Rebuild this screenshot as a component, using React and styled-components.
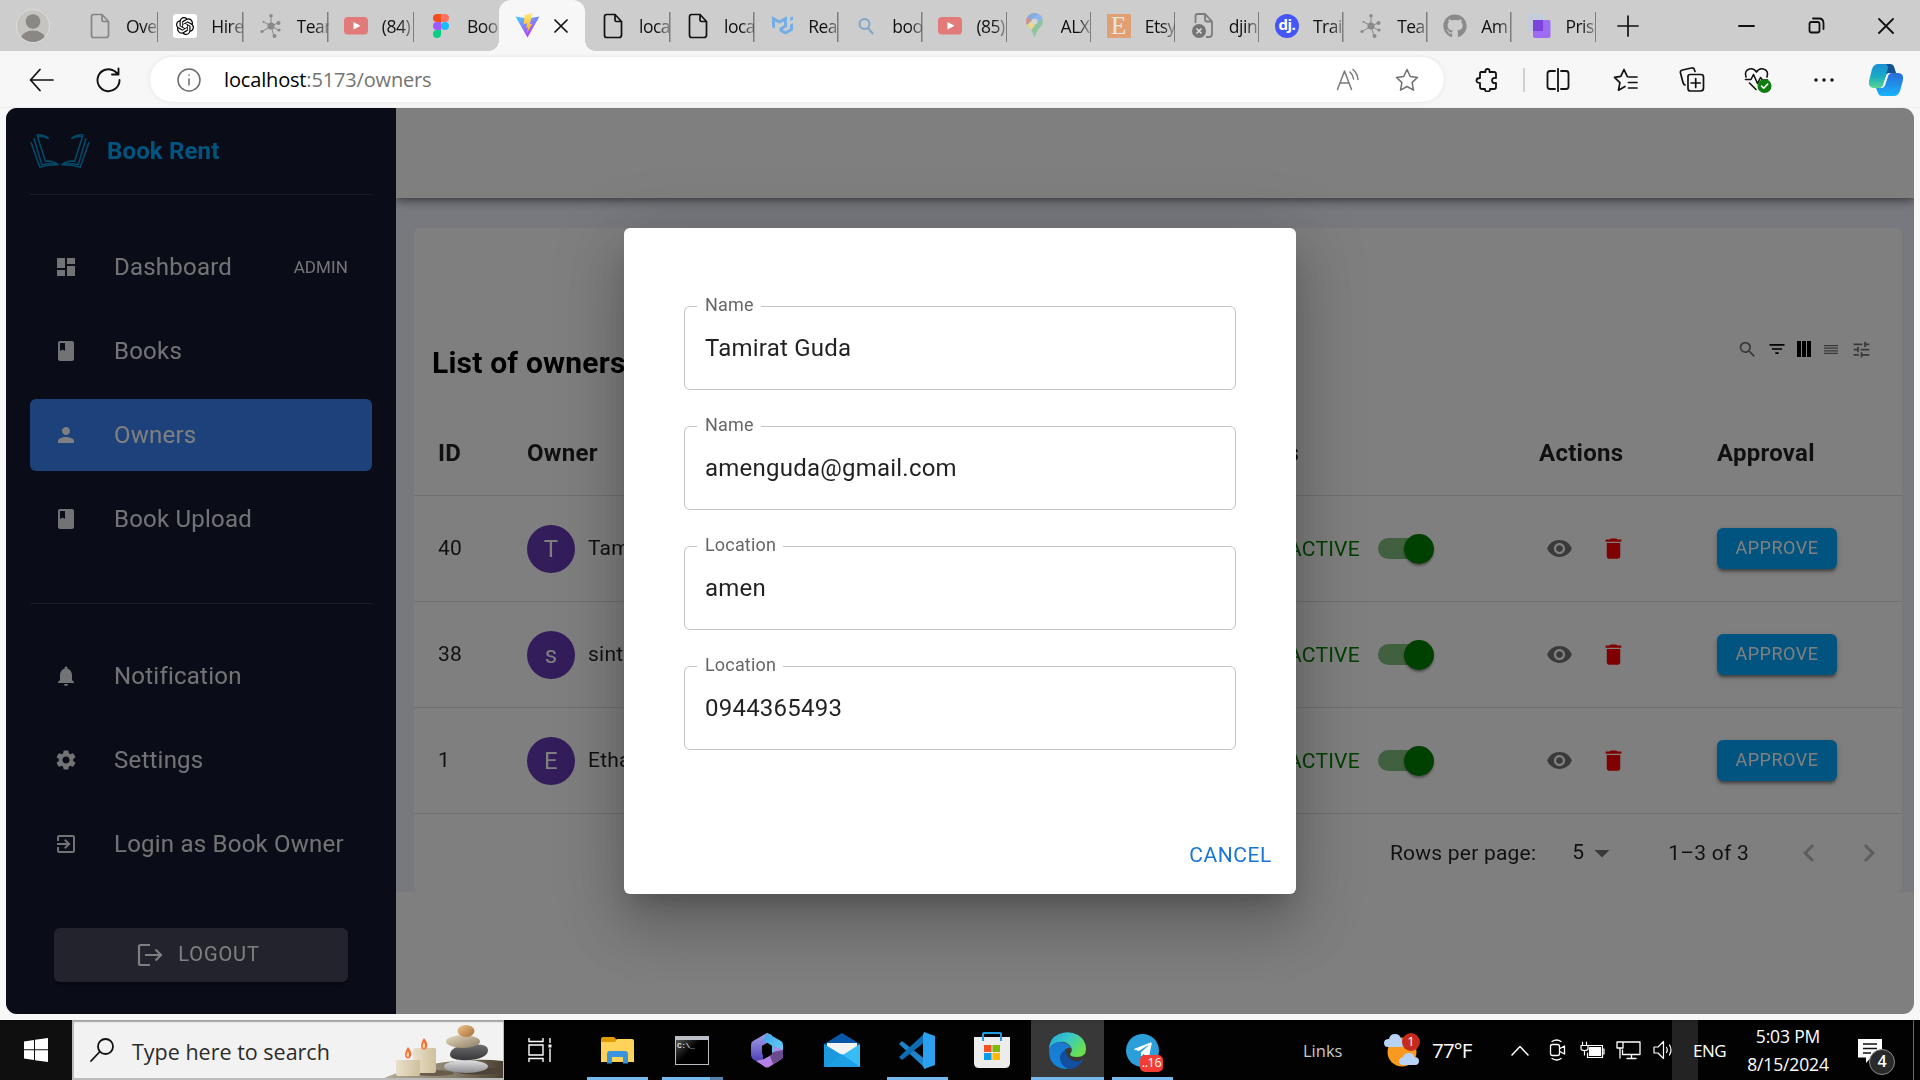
import React from "react";
import styled, { createGlobalStyle } from "styled-components";
import {
  MdDashboard, MdBook, MdPerson, MdNotifications, MdSettings, MdExitToApp,
  MdSearch, MdFilterList, MdTune, MdVisibility, MdDelete, MdArrowDropDown,
  MdChevronLeft, MdChevronRight,
} from "react-icons/md";
import { FaGithub, FaTelegramPlane } from "react-icons/fa";
import { SiOpenai, SiMui } from "react-icons/si";

const ui = `"Open Sans", "Noto Sans", sans-serif`;

const GlobalStyle = createGlobalStyle`
  *, *::before, *::after { box-sizing: border-box; }
  body { margin: 0; overflow: hidden; background: #f7f7f7; font-family: Roboto, "Liberation Sans", sans-serif; }
  svg { display: block; flex: none; }
`;

const Screen = styled.div`
  width: 1920px;
  height: 1080px;
  display: flex;
  flex-direction: column;
  overflow: hidden;
`;

/* ---------- browser chrome ---------- */
const TabStrip = styled.div`
  height: 51px;
  flex: none;
  display: flex;
  background: #cdcdcd;
`;
const Profile = styled.div`
  width: 73px;
  flex: none;
  padding: 9px 0 0 16px;
`;
const Tab = styled.div`
  width: ${(p) => p.$w}px;
  height: 51px;
  flex: none;
  display: flex;
  align-items: center;
  padding-left: ${(p) => p.$pad || 15}px;
  background: linear-gradient(#7d7d7d, #7d7d7d) right 0 top 12px / ${(p) => (p.$last ? 0 : 1.5)}px 30px no-repeat;
`;
const TabIcon = styled.div`
  width: 24px;
  flex: none;
  display: flex;
  justify-content: center;
`;
const TabLabel = styled.div`
  margin-left: 14px;
  flex: 1;
  min-width: 0;
  overflow: hidden;
  white-space: nowrap;
  font: 17.5px/26px ${ui};
  letter-spacing: -0.5px;
  color: #111;
  mask-image: linear-gradient(90deg, #000 55%, transparent 115%);
`;
const ActiveTab = styled.div`
  width: 86px;
  height: 51px;
  flex: none;
  display: flex;
  align-items: center;
  padding: 0 17px 0 16px;
  justify-content: space-between;
  border-radius: 12px 12px 0 0;
  background: #f7f7f7;
  position: relative;
  &::before, &::after {
    content: "";
    position: absolute;
    bottom: 0;
    width: 10px;
    height: 10px;
  }
  &::before { left: -10px; background: radial-gradient(circle at 0 0, #cdcdcd 9.5px, #f7f7f7 10px); }
  &::after { right: -10px; background: radial-gradient(circle at 100% 0, #cdcdcd 9.5px, #f7f7f7 10px); }
`;
const NewTab = styled.div`
  width: 64px;
  display: flex;
  align-items: center;
  justify-content: center;
`;
const WindowButtons = styled.div`
  margin-left: auto;
  display: flex;
  align-items: center;
  gap: 53px;
  padding-right: 26px;
`;
const Toolbar = styled.div`
  height: 57px;
  flex: none;
  display: flex;
  align-items: center;
  background: #f7f7f7;
`;
const NavButtons = styled.div`
  width: 150px;
  display: flex;
  align-items: center;
  gap: 42px;
  padding-left: 29px;
`;
const AddressBar = styled.div`
  width: 1294px;
  height: 45px;
  border-radius: 23px;
  background: #fff;
  box-shadow: 0 0 4px rgba(0, 0, 0, 0.09);
  display: flex;
  align-items: center;
  padding: 0 25px 0 27px;
`;
const Url = styled.div`
  margin-left: 23px;
  flex: 1;
  font: 20px/30px ${ui};
  letter-spacing: -0.16px;
  color: #737373;
  b { font-weight: 400; color: #000; }
`;
const AddressActions = styled.div`
  display: flex;
  align-items: center;
  gap: 35px;
`;
const ToolbarActions = styled.div`
  flex: 1;
  display: flex;
  align-items: center;
  padding-left: 10px;
`;
const ActionSlot = styled.div`
  width: ${(p) => p.$w || 66.5}px;
  flex: none;
  display: flex;
  justify-content: center;
`;
const ToolSep = styled.div`
  width: 2px;
  height: 24px;
  background: #d0d0d0;
  margin-left: 2px;
`;

/* ---------- page ---------- */
const Frame = styled.div`
  flex: none;
  height: 912px;
  background: #f7f7f7;
  filter: drop-shadow(0 1px 1.5px rgba(0, 0, 0, 0.2));
`;
const Viewport = styled.div`
  position: relative;
  flex: none;
  width: 1908px;
  height: 906px;
  margin: 0 6px 6px;
  border-radius: 11px;
  overflow: hidden;
  display: flex;
  background: #fff;
`;
const Sidebar = styled.aside`
  width: 390px;
  flex: none;
  padding: 0 24px;
  background: #151a30;
  display: flex;
  flex-direction: column;
`;
const Brand = styled.div`
  height: 87px;
  display: flex;
  align-items: center;
  gap: 17px;
  padding-bottom: 1px;
  border-bottom: 1px solid #363a50;
`;
const BrandName = styled.div`
  font-size: 24px;
  font-weight: 700;
  line-height: 36px;
  letter-spacing: 0.15px;
  color: #00a8ff;
`;
const NavGroup = styled.nav`
  display: flex;
  flex-direction: column;
  gap: 12px;
  padding: 36px 0 ${(p) => p.$bottom}px;
  border-bottom: ${(p) => (p.$divided ? "1px solid #363a50" : "none")};
`;
const NavItem = styled.div`
  height: 72px;
  border-radius: 6px;
  padding: 0 24px;
  display: flex;
  align-items: center;
  color: ${(p) => (p.$active ? "#fff" : "#e4e6ea")};
  background: ${(p) => (p.$active ? "#3b82f6" : "transparent")};
`;
const NavLabel = styled.div`
  margin-left: 36px;
  flex: 1;
  white-space: nowrap;
  font-size: 24px;
  line-height: 36px;
  letter-spacing: 0.225px;
`;
const NavTag = styled.div`
  font-size: 17px;
  letter-spacing: 0.1px;
`;
const LogoutButton = styled.div`
  height: 54px;
  margin: 0 24px;
  padding-right: 5px;
  border-radius: 6px;
  background: #444758;
  box-shadow: 0 4px 2px -2px rgba(0, 0, 0, 0.3), 0 2px 8px rgba(0, 0, 0, 0.2);
  display: flex;
  align-items: center;
  justify-content: center;
  gap: 15px;
  color: #fff;
  font-size: 20px;
  letter-spacing: 0.9px;
  span { padding-bottom: 2px; }
`;
const Main = styled.main`
  flex: 1;
  display: flex;
  flex-direction: column;
`;
const AppBar = styled.div`
  height: 90px;
  flex: none;
  background: #fff;
  position: relative;
  box-shadow: 0 3px 6px -1px rgba(0, 0, 0, 0.3), 0 6px 8px rgba(0, 0, 0, 0.14), 0 1px 15px rgba(0, 0, 0, 0.12);
  clip-path: inset(0 0 -30px 0);
`;
const Content = styled.div`
  height: 694px;
  padding: 30px 12px 0 18px;
  background: #f1f3ff;
`;
const Card = styled.div`
  height: 664px;
  border-radius: 6px;
  background: #fff;
`;
const CardHead = styled.div`
  height: 182px;
  padding: 86px 30px 0 18px;
  display: flex;
  align-items: center;
  justify-content: space-between;
`;
const CardTitle = styled.h2`
  margin: 2px 0 0;
  font-size: 30px;
  font-weight: 700;
  line-height: 40px;
  letter-spacing: 0.2px;
  color: #000;
`;
const CardTools = styled.div`
  display: flex;
  align-items: center;
  margin-bottom: 26px;
  color: #737373;
`;
const ToolSlot = styled.div`
  width: ${(p) => p.$w}px;
  display: flex;
  justify-content: flex-end;
  color: ${(p) => (p.$dark ? "#000" : "inherit")};
`;
const Row = styled.div`
  height: ${(p) => (p.$head ? 86 : 106)}px;
  padding-left: 24px;
  display: grid;
  grid-template-columns: 89px 701px 311px 178px 1fr;
  align-items: center;
  border-bottom: 1px solid #e0e0e0;
  color: rgba(0, 0, 0, 0.87);
  font-size: ${(p) => (p.$head ? 24 : 21)}px;
  font-weight: ${(p) => (p.$head ? 700 : 400)};
  letter-spacing: ${(p) => (p.$head ? 0.26 : 0.225)}px;
`;
const Text = styled.span`
  padding-bottom: 2px;
`;
const OwnerCell = styled.div`
  display: flex;
  align-items: center;
  gap: 13px;
`;
const Avatar = styled.div`
  width: 48px;
  height: 48px;
  border-radius: 50%;
  background: #673ab7;
  color: #fff;
  font-size: 24px;
  display: flex;
  align-items: center;
  justify-content: center;
`;
const StatusCell = styled.div`
  padding-left: 60px;
  display: flex;
  align-items: center;
  color: green;
`;
const StatusLabel = styled.span`
  width: 90px;
`;
const SwitchTrack = styled.span`
  width: 51px;
  height: 21px;
  border-radius: 11px;
  background: #80c080;
  display: flex;
  align-items: center;
`;
const SwitchThumb = styled.span`
  flex: none;
  width: 30px;
  height: 30px;
  margin-left: 26px;
  border-radius: 50%;
  background: green;
  box-shadow: 0 3px 2px -1px rgba(0, 0, 0, 0.2), 0 1.5px 3px rgba(0, 0, 0, 0.25);
`;
const ActionCell = styled.div`
  display: flex;
  gap: 27px;
  padding-left: 7px;
  color: #757575;
`;
const Danger = styled.span`
  color: #f00;
`;
const ApproveButton = styled.div`
  width: 120px;
  height: 41px;
  padding-bottom: 2px;
  border-radius: 6px;
  background: #00a8ff;
  color: #fff;
  font-size: 18px;
  font-weight: 400;
  letter-spacing: 0.51px;
  display: flex;
  align-items: center;
  justify-content: center;
  box-shadow: 0 4px 2px -2px rgba(0, 0, 0, 0.2), 0 3px 3px rgba(0, 0, 0, 0.2), 0 2px 7px rgba(0, 0, 0, 0.16);
`;
const Pagination = styled.div`
  height: 78px;
  display: flex;
  align-items: center;
  justify-content: flex-end;
  padding-right: 15px;
  font-size: 21px;
  letter-spacing: 0.225px;
  color: rgba(0, 0, 0, 0.87);
`;
const PageSize = styled.div`
  display: flex;
  align-items: center;
  margin: 0 48px 0 36px;
`;
const Pager = styled.div`
  display: flex;
  gap: 24px;
  margin-left: 42px;
  color: #bdbdbd;
`;

/* ---------- dialog ---------- */
const Backdrop = styled.div`
  position: absolute;
  inset: 0;
  background: rgba(0, 0, 0, 0.5);
  display: flex;
  align-items: center;
  justify-content: center;
`;
const Dialog = styled.div`
  width: 672px;
  height: 666px;
  padding: 66px 60px 0;
  border-radius: 6px;
  background: #fff;
  box-shadow: 0 16px 22px -10px rgba(0, 0, 0, 0.2), 0 36px 57px 4px rgba(0, 0, 0, 0.14), 0 13px 69px 12px rgba(0, 0, 0, 0.12);
  display: flex;
  flex-direction: column;
`;
const Field = styled.fieldset`
  min-width: 0;
  height: 96px;
  margin: 0 0 24px;
  padding: 0 20px;
  border: 1px solid #c4c4c4;
  border-radius: 6px;
`;
const FieldLabel = styled.legend`
  margin-left: -8px;
  padding: 0 7px 0 8px;
  height: 25px;
  font-size: 18px;
  line-height: 22px;
  letter-spacing: 0.17px;
  color: #666;
`;
const FieldValue = styled.div`
  padding-top: 12px;
  font-size: 24px;
  line-height: 34px;
  letter-spacing: 0.225px;
  color: rgba(0, 0, 0, 0.87);
`;
const DialogActions = styled.div`
  margin: auto -36px 11px;
  display: flex;
  justify-content: flex-end;
  font-size: 21px;
  line-height: 55px;
  letter-spacing: 0.6px;
  font-weight: 400;
  color: #1976d2;
`;

/* ---------- taskbar ---------- */
const Taskbar = styled.div`
  height: 60px;
  flex: none;
  display: flex;
  background: #020202;
  color: #fff;
  font-family: ${ui};
`;
const StartButton = styled.div`
  width: 72px;
  display: flex;
  align-items: center;
  justify-content: center;
  background: #0f0f0f;
`;
const SearchBox = styled.div`
  width: 432px;
  height: 60px;
  border: 2px solid #bcbcbc;
  border-right-width: 1px;
  background: #f2f2f2;
  display: flex;
  align-items: center;
  padding-left: 16px;
  color: #2b2b2b;
  font-size: 21.5px;
  overflow: hidden;
`;
const SearchText = styled.div`
  flex: 1;
  margin-left: 18px;
  padding-top: 2px;
  white-space: nowrap;
`;
const TaskItem = styled.div`
  width: ${(p) => p.$w || 75}px;
  height: 60px;
  display: flex;
  align-items: center;
  justify-content: center;
  background: ${(p) => (p.$active ? "#383838" : "transparent")};
  box-shadow: ${(p) => (p.$active ? "inset 0 -3px #76b9ed" : "none")};
`;
const TaskInner = styled.div`
  width: 61px;
  height: 60px;
  display: flex;
  align-items: center;
  justify-content: center;
  border-bottom: 3px solid ${(p) => (p.$open ? "#76b9ed" : "transparent")};
  padding-top: 3px;
  border-image: ${(p) => (p.$stacked ? "linear-gradient(90deg, #76b9ed 77%, #3f6a8c 77%, #5482a8 80%) 1" : "none")};
`;
const Tray = styled.div`
  margin-left: auto;
  display: flex;
  align-items: center;
  height: 60px;
`;
const TrayText = styled.div`
  width: ${(p) => p.$w}px;
  font-size: ${(p) => p.$size || 16.5}px;
  letter-spacing: ${(p) => p.$ls || 0}px;
  color: ${(p) => p.$color || "#fff"};
  white-space: nowrap;
`;
const TraySlot = styled.div`
  width: ${(p) => p.$w}px;
  display: flex;
`;
const Language = styled.div`
  width: 54px;
  height: 60px;
  display: flex;
  align-items: center;
  background: linear-gradient(90deg, #232323 26px, transparent 26px);
  padding-left: 21px;
  font-size: 17px;
  letter-spacing: -0.5px;
`;
const Clock = styled.div`
  width: 124px;
  display: flex;
  flex-direction: column;
  align-items: center;
  font-size: 17.5px;
  line-height: 28px;
  letter-spacing: -0.15px;
`;
const ShowDesktop = styled.div`
  width: 7px;
  height: 60px;
  border-left: 1px solid #6a6a6a;
`;

/* ---------- drawings ---------- */
const PageIcon = ({ color }) => (
  <svg width="20" height="26" viewBox="0 0 20 26" fill="none" stroke={color} strokeWidth="1.7">
    <path d="M3.500 1.500h8.500l6.500 7v13.500q0 2.500-2.500 2.500H3.500Q1.500 24.500 1.500 22V4Q1.500 1.500 3.500 1.500z M12 1.500v5.500q0 1.500 1.500 1.500h5" />
  </svg>
);
const HubIcon = () => (
  <svg width="24" height="26" viewBox="0 0 24 26" stroke="#8a8a8a" fill="#8a8a8a">
    <path d="M12 13V3M12 13l7-3M12 13l7 4M12 13l3 10M12 13l-8 5M12 13L5 9" fill="none" strokeWidth="1" />
    <circle cx="12" cy="13" r="3.600" stroke="none" />
    <circle cx="12" cy="2.800" r="1.800" stroke="none" /><circle cx="19.500" cy="10" r="2" stroke="none" />
    <circle cx="20" cy="17" r="1.600" stroke="none" /><circle cx="15.500" cy="23" r="2" stroke="none" />
    <circle cx="3" cy="18.500" r="1.600" stroke="none" /><circle cx="4.500" cy="9" r="1" stroke="none" />
  </svg>
);
const YouTubeIcon = () => (
  <svg width="24" height="18" viewBox="0 0 24 18"><rect width="24" height="17.500" rx="4" fill="#e27a7a" /><path d="M9.500 5l7 3.800-7 3.800z" fill="#fff" /></svg>
);
const FigmaIcon = () => (
  <svg width="16" height="24" viewBox="0 0 16 24">
    <path d="M8 0H4a4 4 0 000 8h4z" fill="#f24e1e" /><path d="M8 0h4a4 4 0 010 8H8z" fill="#ff7262" />
    <path d="M8 8H4a4 4 0 000 8h4z" fill="#a259ff" /><circle cx="12" cy="12" r="4" fill="#1abcfe" />
    <path d="M8 16H4a4 4 0 104 4z" fill="#0acf83" />
  </svg>
);
const ViteIcon = () => (
  <svg width="25" height="25" viewBox="0 0 25 25">
    <defs>
      <linearGradient id="vt" x1="0" y1="0" x2=".6" y2="1"><stop offset="0" stopColor="#41d1ff" /><stop offset="1" stopColor="#bd34fe" /></linearGradient>
      <linearGradient id="vb" x1="0" y1="0" x2="0" y2="1"><stop offset="0" stopColor="#ffea83" /><stop offset="1" stopColor="#ffa800" /></linearGradient>
    </defs>
    <path d="M.5 3.500l12 2 12-2L12.500 24.500z" fill="url(#vt)" />
    <path d="M17.500 0L9.500 2l-.8 9 3.400-.6-1 4.600 2-.7-1.400 6.200 5.600-9.700-2.700.5 1.400-4.600z" fill="url(#vb)" />
  </svg>
);
const SearchGlyph = () => (
  <svg width="16" height="18" viewBox="0 0 16 18" fill="none" stroke="#7fa6c8" strokeWidth="2"><circle cx="6.500" cy="7" r="5" /><path d="M10 11l5 6" /></svg>
);
const MapsIcon = () => (
  <svg width="17" height="25" viewBox="0 0 17 25">
    <defs><clipPath id="pin"><path d="M8.500 0a8.300 8.300 0 00-8.300 8.500C.2 14 6.500 15.500 8.500 25 10.500 15.500 16.800 14 16.800 8.500A8.300 8.300 0 008.500 0z" /></clipPath></defs>
    <g clipPath="url(#pin)"><rect width="17" height="25" fill="#8fc4a0" /><path d="M0 0h17L4 14 0 12z" fill="#8aa9e0" /><path d="M0 3l5 4-5 6z" fill="#e28a82" /><path d="M0 13L5 8l4 4-5 7z" fill="#ecd68a" /><path d="M8 4l6-5 4 6-6 4z" fill="#8bb5ec" /></g>
    <circle cx="8.500" cy="8.500" r="3" fill="#d5d5d5" />
  </svg>
);
const EtsyBadge = styled.div`
  width: 24px; height: 24px; background: #e0a073; color: #e8e4e0;
  font: 25px/24px "Liberation Serif", serif; text-align: center;
`;
const BrokenPage = () => (
  <svg width="22" height="25" viewBox="0 0 22 25" fill="none" stroke="#7d7d7d" strokeWidth="1.800">
    <path d="M3.500 10V3Q3.500 1 5.500 1H13l7 7.500V21q0 3-3 3h-3M13 1v5.500q0 2 2 2h5" />
    <circle cx="7" cy="18" r="7" fill="#747474" stroke="none" /><path d="M4.500 15.500l5 5m0-5l-5 5" stroke="#ddd" strokeWidth="1.600" />
  </svg>
);
const DjBadge = styled.div`
  width: 24px; height: 24px; border-radius: 50%; background: #4656f6; color: #fff;
  font: 700 15px/20px "Open Sans", sans-serif; text-align: center; letter-spacing: -0.5px;
`;
const PrismIcon = () => (
  <svg width="24" height="24" viewBox="0 0 24 24"><path d="M.5 1h15v16H.5z" fill="#c3ccd8" stroke="#b5d4e6" strokeDasharray="2 1" /><rect x="6" y="6" width="17.500" height="18" rx="2" fill="#9d6cf2" /><path d="M6 6h10v11H6z" fill="#7d44dc" /></svg>
);
const AvatarIcon = () => (
  <svg width="34" height="34" viewBox="0 0 34 34"><defs><clipPath id="av"><circle cx="17" cy="17" r="16" /></clipPath></defs><circle cx="17" cy="17" r="16.500" fill="#c5c4c1" stroke="#dedddb" /><g clipPath="url(#av)" fill="#8b8784"><circle cx="17" cy="12.500" r="7.300" /><ellipse cx="17" cy="30" rx="12" ry="8.500" /></g></svg>
);
const Line = ({ w = 24, h = 24, d, color = "#111", sw = 1.6, children }) => (
  <svg width={w} height={h} viewBox={`0 0 ${w} ${h}`} fill="none" stroke={color} strokeWidth={sw} strokeLinecap="round" strokeLinejoin="round">
    <path d={d} />{children}
  </svg>
);
const starPath = "M12 1.500l3.200 6.900 7.300 1-5.400 5.200 1.400 7.600L12 18.500l-6.500 3.700 1.400-7.600L1.500 9.400l7.300-1z";
const CopilotIcon = () => (
  <svg width="36" height="34" viewBox="0 0 36 34">
    <defs>
      <linearGradient id="c1" x1="0" y1="0" x2="0" y2="1"><stop offset="0" stopColor="#1a8fd6" /><stop offset=".5" stopColor="#18a9c8" /><stop offset="1" stopColor="#55d68c" /></linearGradient>
      <linearGradient id="c2" x1="0" y1="0" x2="0" y2="1"><stop offset="0" stopColor="#2a6bd8" /><stop offset="1" stopColor="#18b2fb" /></linearGradient>
    </defs>
    <path d="M10 1h12q3 0 4 3l2 6h-6q-3 0-4 3l-3 9q-1 3-4 3H6q-6 0-5-7L4 6q2-5 6-5z" fill="url(#c1)" />
    <path d="M26 33H14q-3 0-4-3l-2-5h5q3 0 4-3l3-9q1-3 4-3h6q6 0 5 7l-3 11q-2 5-6 5z" fill="url(#c2)" />
    <path d="M21 1q4 0 5 3l2 6h-7q-2 0-3 2l2-7q0-3-2-4z" fill="#15508f" />
    <path d="M18.500 11.500q1-1.500 3.500-1.500-1.500 1-2 3l-3 9q-1 2.500-3.500 3 1.500-1.500 2-3z" fill="#f4fbff" />
  </svg>
);
const BookLogo = () => (
  <svg width="60" height="36" viewBox="0 0 61 36" fill="none" stroke="#0793d2" strokeWidth="1.600">
    <path d="M7 1.500l9 28M7 1.500q7-.5 12 4-5-3-12-2M4 5l8 27M1 9l9 25.500q10-3 19-2.500M16 28.500q7-1 13 3.500M12 32q9-2 17 0" />
    <path d="M54 1.500l-9 28M54 1.500q-7-.5-12 4 5-3 12-2M57 5l-8 27M60 9l-9 25.500q-10-3-19-2.500M45 28.500q-7-1-13 3.500M49 32q-9-2-17 0" />
  </svg>
);
const LogoutIcon = () => (
  <svg width="26" height="24" viewBox="0 0 26 24" fill="none" stroke="#fff" strokeWidth="2.200"><path d="M13 2H3.500Q2 2 2 3.500v17Q2 22 3.500 22H13M8 12h16M18.500 6.500L24 12l-5.500 5.500" /></svg>
);
const ColumnsIcon = () => (
  <svg width="14" height="16" viewBox="0 0 14 16" fill="#000"><path d="M0 0h4v16H0zM5 0h4v16H5zM10 0h4v16h-4z" /></svg>
);
const DensityIcon = () => (
  <svg width="14" height="9" viewBox="0 0 14 9" fill="#737373"><path d="M0 0h14v1.200H0zM0 2.600h14v1.200H0zM0 5.200h14v1.200H0zM0 7.700h14v1.200H0z" /></svg>
);
const WindowsIcon = () => (
  <svg width="24" height="24" viewBox="0 0 24 24" fill="#fff"><path d="M0 3.500L10 2v9.300H0zM11 1.800L24 0v11.300H11zM0 12.300h10V22L0 20.500zM11 12.300h13V24l-13-1.800z" /></svg>
);
const Candles = () => (
  <svg width="121" height="58" viewBox="0 0 121 58">
    <defs>
      <linearGradient id="wax" x1="0" x2="1"><stop offset="0" stopColor="#e9e0cb" /><stop offset="1" stopColor="#cfc09c" /></linearGradient>
      <linearGradient id="gr" x1="0" x2="1"><stop offset="0" stopColor="#b0ab98" /><stop offset=".6" stopColor="#857b68" /><stop offset="1" stopColor="#4c4032" /></linearGradient>
      <linearGradient id="s1" x1="0" y1="0" x2="1" y2="1"><stop offset="0" stopColor="#efc58d" /><stop offset="1" stopColor="#a86c34" /></linearGradient>
      <linearGradient id="s2" x1="0" y1="0" x2="1" y2="1"><stop offset="0" stopColor="#e5dac2" /><stop offset="1" stopColor="#8c7c60" /></linearGradient>
      <linearGradient id="s3" x1="0" y1="0" x2="0" y2="1"><stop offset="0" stopColor="#6d6d70" /><stop offset="1" stopColor="#37373a" /></linearGradient>
      <linearGradient id="s4" x1="0" y1="0" x2="0" y2="1"><stop offset="0" stopColor="#e2e2e5" /><stop offset="1" stopColor="#8c8c90" /></linearGradient>
    </defs>
    <path d="M0 58Q35 42 85 39q20-1 36 1v18z" fill="url(#gr)" />
    <ellipse cx="52" cy="52" rx="20" ry="3" fill="#675b49" /><ellipse cx="96" cy="50" rx="24" ry="3.500" fill="#4d4336" />
    <rect x="31" y="27" width="23" height="25" rx="2" fill="url(#wax)" /><rect x="14" y="39" width="24" height="16" rx="2" fill="url(#wax)" />
    <path d="M26 26q5 6 2.500 10-2.500 3-5 0Q22 32 26 26zM42 17q5 6 2.500 10-2.500 3-5 0Q38 23 42 17z" fill="#f2703b" /><path d="M26 30q2 4 0 6.500-3-2 0-6.500zM42 21q2 4 0 6.500-3-2 0-6.500z" fill="#ffd9a0" />
    <ellipse cx="84" cy="45.500" rx="22" ry="6.500" fill="url(#s4)" /><path d="M68 34q0-9 18-10 20-2 20 5 0 8-18 10-19 1-20-5z" fill="url(#s3)" />
    <ellipse cx="81" cy="20.500" rx="17" ry="6.500" fill="url(#s2)" /><ellipse cx="84" cy="10" rx="8.500" ry="6" fill="url(#s1)" />
  </svg>
);
const TaskViewIcon = () => (
  <svg width="24" height="24" viewBox="0 0 24 24" fill="none" stroke="#fff" strokeWidth="1.400"><path d="M1 0v3.500h14V0M1 24v-3.500h14V24M1 7h14v10H1zM22 0v5M22 10.500V24" /><path d="M20.500 6.500h3v3h-3z" fill="#fff" stroke="none" /></svg>
);
const FolderIcon = () => (
  <svg width="33" height="27" viewBox="0 0 33 27"><path d="M0 2q0-2 2-2h11l3 3v5H0z" fill="#e09b00" /><path d="M0 5h14l2-3h15q2 0 2 2v21H0z" fill="#ffd25a" /><path d="M6 26.500V17q0-3 3-3h15q3 0 3 3v9.500h-5V20H11v6.500z" fill="#3b94df" /></svg>
);
const TermText = styled.div`
  width: 34px; height: 29px; border: 1.500px solid #b9bfc4; border-top: 4px solid #b9bfc4;
  background: linear-gradient(135deg, #555, #000 45%); color: #ddd; font: 700 8px/11px "Liberation Mono", monospace; padding-left: 1px; letter-spacing: -0.5px;
`;
const M365Icon = () => (
  <svg width="32" height="35" viewBox="0 0 32 35">
    <defs>
      <linearGradient id="m1" x1="0" y1="0" x2="0" y2="1"><stop offset="0" stopColor="#a9a2f0" /><stop offset="1" stopColor="#4b3fb4" /></linearGradient>
      <linearGradient id="m2" x1="0" y1="0" x2="1" y2="1"><stop offset="0" stopColor="#3fa3e8" /><stop offset="1" stopColor="#6bd4f8" /></linearGradient>
    </defs>
    <path d="M16 0L2 8Q0 9 0 12v10q0 3 3 5l5 2 4-3V13l9-6V2z" fill="url(#m1)" /><path d="M16 0l14 8q2 1 2 4v13l-5-1-6-3v-8l-9-6z" fill="url(#m2)" />
    <path d="M32 17v6q0 2-2 3.500L18 34q-2 1-4 0L5 28l8-2 9-5q3-3 0-8z" fill="#b583e6" /><path d="M32 17v6q0 2-2 3.500L22 31l-3-8 3-4z" fill="#6c4a8e" />
    <path d="M11 13l5-3 5 3v8l-5 3-5-3z" fill="#020202" />
  </svg>
);
const MailIcon = () => (
  <svg width="36" height="34" viewBox="0 0 36 34"><path d="M0 11L18 0l18 11v6H0z" fill="#0a57a8" /><path d="M3 10h30v12H3z" fill="#f3f3f3" /><path d="M0 11l18 11-18 12z" fill="#1c98dd" /><path d="M36 11v23H0z" fill="#37bdf3" /><path d="M0 34h36L18 21z" fill="#1e9ee5" /></svg>
);
const CodeIcon = () => (
  <svg width="36" height="37" viewBox="0 0 36 37"><path d="M0 12l3-3 24 19v9z" fill="#1f84cc" /><path d="M0 25l3 3L27 9V0z" fill="#0f6db3" /><path d="M25 0l11 4v29l-11 4-1-3V3z" fill="#2ca0ee" /></svg>
);
const StoreIcon = () => (
  <svg width="36" height="36" viewBox="0 0 36 36"><path d="M9 9V2q0-1 1-1h16q1 0 1 1v7" fill="none" stroke="#1f9de6" strokeWidth="2" /><path d="M0 5h36v26q0 5-5 5H5q-5 0-5-5z" fill="#ececec" /><path d="M9 9V5M27 9V5" stroke="#1f9de6" strokeWidth="2" /><path d="M10 13h7.500v7H10z" fill="#f05125" /><path d="M18.500 13H26v7h-7.500z" fill="#7fba00" /><path d="M10 21h7.500v7H10z" fill="#0a9be8" /><path d="M18.500 21H26v7h-7.500z" fill="#ffb900" /></svg>
);
const EdgeIcon = () => (
  <svg width="37" height="37" viewBox="0 0 37 37">
    <defs>
      <linearGradient id="e1" x1="0" y1="0" x2="1" y2=".6"><stop offset="0" stopColor="#22a5dd" /><stop offset=".5" stopColor="#38c9c6" /><stop offset="1" stopColor="#6be04a" /></linearGradient>
      <linearGradient id="e2" x1="0" y1="0" x2="0" y2="1"><stop offset="0" stopColor="#1b78cf" /><stop offset="1" stopColor="#1187dc" /></linearGradient>
    </defs>
    <path d="M0 18Q0 6 10 2 20-2 29 3q8 5 8 14 0 8-9 8-7 0-7-3 3-3 1-7-4-6-12-5Q2 11 0 18z" fill="url(#e1)" />
    <path d="M0 18Q3 9 12 10q8 1 10 6-3-1-5 1-5 5-1 12 4 6 11 5-5 3-11 3Q0 35 0 18z" fill="url(#e2)" />
    <path d="M17 17q-7 4-6 11 2 7 9 9 8 0 13-7 2-3 0-2-6 3-12-1-5-4-4-10z" fill="#134fa0" />
  </svg>
);
const TelegramWrap = styled.div`
  position: relative; width: 33px; height: 33px; border-radius: 50%; background: #2b9fda;
  display: flex; align-items: center; justify-content: center; color: #fff;
`;
const TelegramBadge = styled.span`
  position: absolute; left: 14px; top: 21px; width: 23px; height: 17px; border-radius: 5px; background: #f23c34;
  font-size: 12.5px; line-height: 16px; text-align: center; letter-spacing: -0.3px;
`;
const WeatherWrap = styled.div`
  position: relative; width: 48px; height: 34px;
`;
const WeatherBadge = styled.span`
  position: absolute; left: 18px; top: 0; width: 18px; height: 18px; border-radius: 50%; background: #c42b1c;
  font-size: 13px; line-height: 17px; text-align: center;
`;
const NotifWrap = styled.div`
  position: relative; width: 55px; height: 36px; margin-top: 13px;
`;
const NotifBadge = styled.span`
  position: absolute; left: 11px; top: 10px; width: 26px; height: 26px; border-radius: 50%; border: 1px solid #8a8a8a; background: #2a2a2a;
  font-size: 16px; line-height: 23px; text-align: center; font-weight: 600;
`;

const leftTabs = [
  [<PageIcon color="#858585" />, "Ove"],
  [<svg width="24" height="24" viewBox="0 0 24 24"><rect width="24" height="24" rx="3" fill="#fff" /><g transform="translate(3 3)"><SiOpenai size={18} /></g></svg>, "Hire"],
  [<HubIcon />, "Tear"],
  [<YouTubeIcon />, "(84)"],
  [<FigmaIcon />, "Boo"],
];
const rightTabs = [
  [<PageIcon color="#111" />, "loca"],
  [<PageIcon color="#111" />, "loca"],
  [<SiMui size={21} color="#74aee4" />, "Rea"],
  [<SearchGlyph />, "boo"],
  [<YouTubeIcon />, "(85)"],
  [<MapsIcon />, "ALX"],
  [<EtsyBadge>E</EtsyBadge>, "Etsy"],
  [<BrokenPage />, "djin"],
  [<DjBadge>dj.</DjBadge>, "Trai"],
  [<HubIcon />, "Tea"],
  [<FaGithub size={24} color="#8a8b8d" />, "Am"],
  [<PrismIcon />, "Pris"],
];
const owners = [
  { id: 40, initial: "T", name: "Tamirat" },
  { id: 38, initial: "s", name: "sinta" },
  { id: 1, initial: "E", name: "Etha" },
];
const fields = [
  ["Name", "Tamirat Guda"],
  ["Name", "amenguda@gmail.com"],
  ["Location", "amen"],
  ["Location", "0944365493"],
];

function BrowserChrome() {
  return (
    <>
      <TabStrip>
        <Profile><AvatarIcon /></Profile>
        {leftTabs.map(([icon, label], i) => (
          <Tab key={i} $w={i === 4 ? 85 : 85.25} $last={i === 4}><TabIcon>{icon}</TabIcon><TabLabel>{label}</TabLabel></Tab>
        ))}
        <ActiveTab><ViteIcon /><Line w={14} h={14} d="M1 1l12 12M13 1L1 13" sw={1.7} /></ActiveTab>
        {rightTabs.map(([icon, label], i) => (
          <Tab key={i} $w={i === 0 ? 85.5 : 84.15} $pad={i === 0 ? 16 : 15.5}><TabIcon>{icon}</TabIcon><TabLabel>{label}</TabLabel></Tab>
        ))}
        <NewTab><Line w={22} h={22} d="M11 1v20M1 11h20" sw={1.7} /></NewTab>
        <WindowButtons>
          <Line w={17} h={17} d="M1 9h15" sw={1.8} />
          <Line w={17} h={17} d="M3.500 5h6q2 0 2 2v6.500q0 2-2 2h-6q-2 0-2-2V7q0-2 2-2zM5 1.500h6q4.500 0 4.500 5V12" sw={1.8} />
          <Line w={16} h={16} d="M1 1l14 14M15 1L1 15" sw={1.8} />
        </WindowButtons>
      </TabStrip>
      <Toolbar>
        <NavButtons>
          <Line w={25} h={24} d="M24 12H1.500M11 1.500L1.500 12 11 22.500" sw={1.7} />
          <Line w={25} h={26} d="M23.500 13A11 11 0 1 1 18.500 4L22.500 7.500M22.500 1.500v6h-6.500" sw={1.9} />
        </NavButtons>
        <AddressBar>
          <Line w={24} h={24} d="M12 11v6M12 7v.3" color="#6b6b6b" sw={1.5}><circle cx="12" cy="12" r="11" /></Line>
          <Url><b>localhost</b>:5173/owners</Url>
          <AddressActions>
            <Line w={24} h={24} d="M1.500 21.500L8.500 3l7 18.500M4 15h9M14 4q3 3 3.500 7M17 1.500q4.500 4 5 10" color="#7a7a7a" sw={1.5} />
            <Line w={24} h={24} d={starPath} color="#707070" sw={1.5} />
          </AddressActions>
        </AddressBar>
        <ToolbarActions>
          <ActionSlot><Line d="M6 4h4.500q-.5-3 2-3t2 3H19q2 0 2 2v4q-4-.500-4 2.500t4 2.500V19q0 2-2 2h-4q.3 2.500-2.500 2.500T10 21H7Q5 21 5 19v-4Q1.500 15 1.500 12.500T5 10V6q0-2 1-2z" sw={1.8} /></ActionSlot>
          <ToolSep />
          <ActionSlot $w={67.5}><Line d="M9 3H4Q1.500 3 1.500 5.500v13Q1.500 21 4 21h5M15 3h5q2.500 0 2.500 2.500v13Q22.500 21 20 21h-5M12 .8v22.400" sw={1.8} /></ActionSlot>
          <ActionSlot><Line w={25} d="M12 18.500l-6.500 3.700 1.400-7.600L1.500 9.400l6.300-1L11 1.500l3.200 6.900M15.500 9h8.500M15.500 14.500h8.500M15.500 20h8.500" sw={1.7} /></ActionSlot>
          <ActionSlot><Line w={26} h={25} d="M9 9.500q0-2 2-2h11q2.500 0 2.500 2.500v11q0 3-3 3H11.500Q9 24 9 21.500zM16.700 11.500v9M12.200 16h9M6 18q-1.500-.5-2-2.500L1.500 6Q1 3.500 3.500 3l9-2Q15 .5 15.500 3l.5 1.500" sw={1.7} /></ActionSlot>
          <ActionSlot><Line w={28} h={26} d="M2 10Q0 3.500 5.500 2 10 1 12.500 5 15 1 19.500 2 25 3.500 23 10M1.500 12.500H7l2.500-5 4 9 3-6 2 2.500h5M5.500 16l6.500 6.500" sw={1.6}><circle cx="20.500" cy="19" r="7" fill="#107c10" stroke="none" /><path d="M17.500 19l2.200 2.200 4-4.200" stroke="#fff" /></Line></ActionSlot>
          <ActionSlot $w={64}><svg width="22" height="6" viewBox="0 0 22 6" fill="#111"><circle cx="3" cy="3" r="1.700" /><circle cx="11" cy="3" r="1.700" /><circle cx="19" cy="3" r="1.700" /></svg></ActionSlot>
          <ActionSlot $w={61}><CopilotIcon /></ActionSlot>
        </ToolbarActions>
      </Toolbar>
    </>
  );
}

function Nav({ icon: Icon, label, tag, active }) {
  return (
    <NavItem $active={active}><Icon size={24} /><NavLabel>{label}</NavLabel>{tag && <NavTag>{tag}</NavTag>}</NavItem>
  );
}

export default function App() {
  return (
    <Screen>
      <GlobalStyle />
      <BrowserChrome />
      <Frame>
        <Viewport>
          <Sidebar>
            <Brand><BookLogo /><BrandName>Book Rent</BrandName></Brand>
            <NavGroup $divided $bottom={48}>
              <Nav icon={MdDashboard} label="Dashboard" tag="ADMIN" />
              <Nav icon={MdBook} label="Books" />
              <Nav icon={MdPerson} label="Owners" active />
              <Nav icon={MdBook} label="Book Upload" />
            </NavGroup>
            <NavGroup $bottom={48}>
              <Nav icon={MdNotifications} label="Notification" />
              <Nav icon={MdSettings} label="Settings" />
              <Nav icon={MdExitToApp} label="Login as Book Owner" />
            </NavGroup>
            <LogoutButton><LogoutIcon /><span>LOGOUT</span></LogoutButton>
          </Sidebar>
          <Main>
            <AppBar />
            <Content>
              <Card>
                <CardHead>
                  <CardTitle>List of owners</CardTitle>
                  <CardTools>
                    <ToolSlot $w={21}><MdSearch size={21} /></ToolSlot>
                    <ToolSlot $w={29} $dark><MdFilterList size={20} /></ToolSlot>
                    <ToolSlot $w={24}><ColumnsIcon /></ToolSlot>
                    <ToolSlot $w={27}><DensityIcon /></ToolSlot>
                    <ToolSlot $w={34}><MdTune size={21} /></ToolSlot>
                  </CardTools>
                </CardHead>
                <Row $head><span>ID</span><span>Owner</span><span>Status</span><span>Actions</span><span>Approval</span></Row>
                {owners.map((o) => (
                  <Row key={o.id}>
                    <Text>{o.id}</Text>
                    <OwnerCell><Avatar>{o.initial}</Avatar><Text>{o.name}</Text></OwnerCell>
                    <StatusCell><StatusLabel>ACTIVE</StatusLabel><SwitchTrack><SwitchThumb /></SwitchTrack></StatusCell>
                    <ActionCell><MdVisibility size={27} /><Danger><MdDelete size={27} /></Danger></ActionCell>
                    <ApproveButton>APPROVE</ApproveButton>
                  </Row>
                ))}
                <Pagination>
                  Rows per page:
                  <PageSize><Text>5</Text><MdArrowDropDown size={36} color="#757575" /></PageSize>
                  1–3 of 3
                  <Pager><MdChevronLeft size={36} /><MdChevronRight size={36} /></Pager>
                </Pagination>
              </Card>
            </Content>
          </Main>
          <Backdrop>
            <Dialog>
              {fields.map(([label, value]) => (
                <Field key={value}><FieldLabel>{label}</FieldLabel><FieldValue>{value}</FieldValue></Field>
              ))}
              <DialogActions>CANCEL</DialogActions>
            </Dialog>
          </Backdrop>
        </Viewport>
      </Frame>
      <Taskbar>
        <StartButton><WindowsIcon /></StartButton>
        <SearchBox>
          <Line w={24} h={24} d="M1 23l8.500-9" sw={1.8}><circle cx="15.500" cy="8.500" r="7.500" /></Line>
          <SearchText>Type here to search</SearchText>
          <Candles />
        </SearchBox>
        <TaskItem $w={71}><TaskViewIcon /></TaskItem>
        <TaskItem $w={84}><TaskInner $open><FolderIcon /></TaskInner></TaskItem>
        <TaskItem $w={66}><TaskInner $open $stacked><TermText>C:\_</TermText></TaskInner></TaskItem>
        <TaskItem $w={84}><TaskInner><M365Icon /></TaskInner></TaskItem>
        <TaskItem $w={66}><TaskInner><MailIcon /></TaskInner></TaskItem>
        <TaskItem $w={84}><TaskInner $open><CodeIcon /></TaskInner></TaskItem>
        <TaskItem $w={65}><TaskInner><StoreIcon /></TaskInner></TaskItem>
        <TaskItem $w={7} />
        <TaskItem $w={73} $active><EdgeIcon /></TaskItem>
        <TaskItem $w={77}><TaskInner $open><TelegramWrap><FaTelegramPlane size={20} /><TelegramBadge>..16</TelegramBadge></TelegramWrap></TaskInner></TaskItem>
        <Tray>
          <TrayText $w={81} $color="#c9c9c9">Links</TrayText>
          <WeatherWrap>
            <svg width="36" height="34" viewBox="0 0 36 34"><circle cx="18" cy="19" r="14.500" fill="#f79a1d" /><path d="M4 14q-4 0-4-4t5-4q1-5 6-5t6 5q4 1 4 4t-4 4zM18 32q-3-1-3-4t4-4q1-4 6-4t5 4q5 0 5 4t-4 4z" fill="#b9d2f8" /></svg>
            <WeatherBadge>1</WeatherBadge>
          </WeatherWrap>
          <TrayText $w={79} $size={20.5} $ls={-0.8}>77°F</TrayText>
          <TraySlot $w={38}><Line w={18} h={11} d="M1 10l8-8.500 8 8.500" color="#fff" sw={1.5} /></TraySlot>
          <TraySlot $w={31}><Line w={17} h={22} d="M3.500 5.500h5q2 0 2 2v7q0 2-2 2h-5q-2 0-2-2v-7q0-2 2-2zM11 9.500l4.500-2.500v8L11 12.500M3 2.500q5-3 9 0M3 19.500q5 3 9 0" color="#fff" sw={1.3} /></TraySlot>
          <TraySlot $w={36}><Line w={25} h={18} d="M8 4.500h14.500v12H7.500V12M23 8h1v5h-1M2.500 1v3M6.500 1v3M1 4.500h7v3q0 2-3.500 2T1 7.500zM4.500 9.500V14" color="#fff" sw={1.2}><path d="M9.500 6.500h11v8h-11z" fill="#fff" /></Line></TraySlot>
          <TraySlot $w={37}><Line w={25} h={20} d="M8 2h16v12.500H6.500V10M15.500 15v3.500M11 18.500h9M1 2h6v6H1zM4 8v10" color="#fff" sw={1.3} /></TraySlot>
          <TraySlot $w={19}><Line w={23} h={20} d="M1 7h4l5.500-5.500v17L5 13H1zM13.500 7.500q1.500 2.500 0 5M16.500 5q3 5 0 10M19.500 2.500q4.500 7.500 0 15" color="#fff" sw={1.2} /></TraySlot>
          <Language>ENG</Language>
          <Clock><span>5:03 PM</span><span>8/15/2024</span></Clock>
          <TraySlot $w={8} />
          <NotifWrap>
            <svg width="24" height="24" viewBox="0 0 24 24"><path d="M0 0h24v18.500H13L8 24v-5.500H0z" fill="#fff" /><path d="M5 5h14M5 9.500h14M5 14h8" stroke="#111" strokeWidth="1.400" /></svg>
            <NotifBadge>4</NotifBadge>
          </NotifWrap>
          <ShowDesktop />
        </Tray>
      </Taskbar>
    </Screen>
  );
}
